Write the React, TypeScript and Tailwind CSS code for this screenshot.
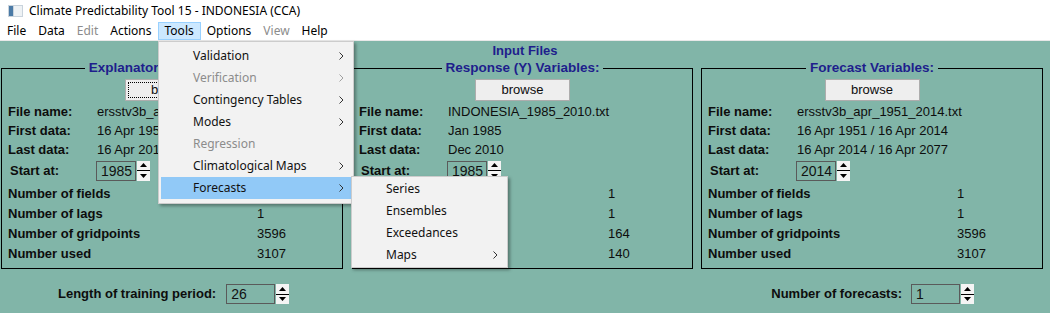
import React from "react"

const ui = { fontFamily: '"Noto Sans", "Open Sans", sans-serif' }
const ar = { fontFamily: '"Liberation Sans", Arial, sans-serif' }

function Chevron({ gray }: { gray?: boolean }) {
  return (
    <svg width="5" height="8" viewBox="0 0 5 8" className="ml-auto">
      <path d="M0.5 0.5 L4 4 L0.5 7.5" fill="none" stroke={gray ? "#a0a0a0" : "#333"} strokeWidth="1" />
    </svg>
  )
}

function Spin({ value, w }: { value: string; w: string }) {
  return (
    <div className="flex items-stretch h-[20px]">
      <div className={`${w} h-full border border-[#5a5a5a] px-[4px] flex items-end pb-[1px] text-[14px] leading-[16px] text-[#111]`}>{value}</div>
      <div className="w-[13px] h-full flex flex-col bg-[#f4f4f4] ml-[1px]">
        <div className="flex-1 flex items-center justify-center border-b border-black">
          <svg width="7" height="4" viewBox="0 0 7 4"><path d="M0 4 L3.5 0 L7 4Z" fill="#000" /></svg>
        </div>
        <div className="flex-1 flex items-center justify-center">
          <svg width="7" height="4" viewBox="0 0 7 4"><path d="M0 0 L3.5 4 L7 0Z" fill="#000" /></svg>
        </div>
      </div>
    </div>
  )
}

type P = {
  title: string
  w: string
  file: string
  first: string
  last: string
  start: string
  nums: string[]
  focus?: boolean
}

function Panel(p: P) {
  const numLabels = ["Number of fields", "Number of lags", "Number of gridpoints", "Number used"]
  return (
    <fieldset className={`${p.w} h-[208px] border border-black px-[6px] pt-[4px] text-[13px] text-[#0d0d0d]`}>
      <legend className="mx-auto px-[4px] font-bold text-[#1e1e8c] text-[13.5px] leading-[14px]">{p.title}</legend>
      <div className="flex justify-center">
        <button className={`w-[95px] h-[22px] bg-[#eeeeee] border border-[#adadad] text-[13px] leading-[14px] ${p.focus ? "outline-1 outline-dotted outline-black -outline-offset-[4px]" : ""}`}>browse</button>
      </div>
      <div className="flex items-center h-[19px] mt-[1px]"><span className="w-[89px] font-bold">File name:</span><span>{p.file}</span></div>
      <div className="flex items-center h-[19px]"><span className="w-[89px] font-bold">First data:</span><span>{p.first}</span></div>
      <div className="flex items-center h-[19px]"><span className="w-[89px] font-bold">Last data:</span><span>{p.last}</span></div>
      <div className="flex items-center h-[21px] mt-[1px]"><span className="w-[88px] pl-[2px] font-bold">Start at:</span><Spin value={p.start} w="w-[40px]" /></div>
      <div className="mt-[3px]">
        {numLabels.map((l, i) => (
          <div key={l} className="flex items-center h-[20px]"><span className="w-[249px] font-bold">{l}</span><span>{p.nums[i]}</span></div>
        ))}
      </div>
    </fieldset>
  )
}

function Item({ label, gray, arrow, hi }: { label: string; gray?: boolean; arrow?: boolean; hi?: boolean }) {
  return (
    <div className={`flex items-center h-[22px] pl-[32px] pr-[7px] ${hi ? "bg-[#91c9f7]" : ""} ${gray ? "text-[#8c8c8c]" : "text-[#111]"}`}>
      <span>{label}</span>
      {arrow && <Chevron gray={gray} />}
    </div>
  )
}

export default function App() {
  const menus = ["File", "Data", "Edit", "Actions", "Tools", "Options", "View", "Help"]
  return (
    <div className="relative w-[1050px] h-[313px] bg-[#81b5a8] overflow-hidden" style={ar}>
      <div className="h-[22px] bg-white flex items-center pl-[8px] text-[12px] text-black" style={ui}>
        <svg width="15" height="12" viewBox="0 0 15 12" className="mr-[6px]">
          <rect x="0" y="0" width="15" height="12" fill="#c9d3dc" />
          <rect x="1" y="1" width="4" height="10" fill="#4a7aa6" />
          <rect x="6" y="1" width="8" height="10" fill="#eef2f5" />
        </svg>
        Climate Predictability Tool 15 - INDONESIA (CCA)
      </div>
      <div className="h-[19px] bg-white flex items-stretch pl-[1px] text-[12px] border-b border-[#e8e8e8]" style={ui}>
        {menus.map(m => (
          <div key={m} className={`px-[6px] flex items-center ${m === "Tools" ? "bg-[#cce8ff] border border-[#99d1ff] px-[5px]" : ""} ${m === "Edit" || m === "View" ? "text-[#8c8c8c]" : "text-black"}`}>{m}</div>
        ))}
      </div>
      <div className="pt-[3px]">
        <div className="text-center font-bold text-[#1e1e8c] text-[13px] leading-[14px]">Input Files</div>
        <div className="flex pl-[1px] mt-[3px]">
          <Panel title="Explanatory (X) Variables:" w="w-[342px]" file="ersstv3b_apr_1951_2014.txt" first="16 Apr 1951 / 16 Apr 2014" last="16 Apr 2014 / 16 Apr 2077" start="1985" nums={["1", "1", "3596", "3107"]} focus />
          <div className="w-[9px] shrink-0" />
          <Panel title="Response (Y) Variables:" w="w-[341px]" file="INDONESIA_1985_2010.txt" first="Jan 1985" last="Dec 2010" start="1985" nums={["1", "1", "164", "140"]} />
          <div className="w-[8px] shrink-0" />
          <Panel title="Forecast Variables:" w="w-[342px]" file="ersstv3b_apr_1951_2014.txt" first="16 Apr 1951 / 16 Apr 2014" last="16 Apr 2014 / 16 Apr 2077" start="2014" nums={["1", "1", "3596", "3107"]} />
        </div>
        <div className="flex items-center mt-[15px] text-[13px] font-bold text-[#0d0d0d]">
          <span className="ml-[58px] mr-[10px]">Length of training period:</span>
          <div className="font-normal"><Spin value="26" w="w-[49px]" /></div>
          <span className="ml-auto mr-[9px]">Number of forecasts:</span>
          <div className="font-normal mr-[76px]"><Spin value="1" w="w-[49px]" /></div>
        </div>
      </div>

      <div className="absolute left-[158px] top-[41px] w-[196px] bg-[#f2f2f2] border border-[#cccccc] shadow-[2px_2px_3px_rgba(0,0,0,0.35)] pt-[3px] pb-[4px] px-[2px] text-[12px]" style={ui}>
        <Item label="Validation" arrow />
        <Item label="Verification" arrow gray />
        <Item label="Contingency Tables" arrow />
        <Item label="Modes" arrow />
        <Item label="Regression" gray />
        <Item label="Climatological Maps" arrow />
        <Item label="Forecasts" arrow hi />
      </div>
      <div className="absolute left-[351px] top-[176px] w-[157px] bg-[#f2f2f2] border border-[#cccccc] shadow-[2px_2px_3px_rgba(0,0,0,0.35)] py-[1px] px-[2px] text-[12px]" style={ui}>
        <Item label="Series" />
        <Item label="Ensembles" />
        <Item label="Exceedances" />
        <Item label="Maps" arrow />
      </div>
    </div>
  )
}
